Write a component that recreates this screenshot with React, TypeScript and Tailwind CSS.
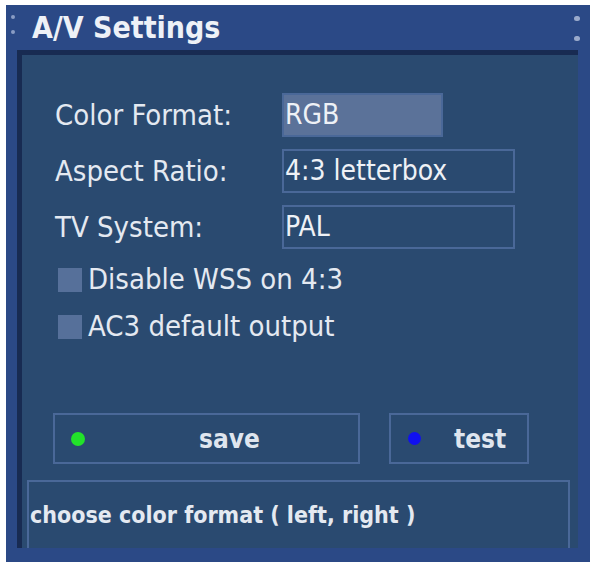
import React from "react";

const font = { fontFamily: '"DejaVu Sans Condensed", "DejaVu Sans", sans-serif' };

const Field = ({ label, value, active, wide }: { label: string; value: string; active?: boolean; wide?: boolean }) => (
  <div className="flex items-center h-[44px]">
    <div className="w-[227px] text-[29px] text-[#e4e9f1] leading-none">{label}</div>
    <div
      className={
        "h-[44px] flex items-center pl-[1px] border-2 text-[28px] leading-none text-[#eef1f6] " +
        (active ? "bg-[#5b7299] border-[#4a6898] " : "border-[#4a6898] ") +
        (wide ? "w-[233px]" : "w-[161px]")
      }
    >
      {value}
    </div>
  </div>
);

const Check = ({ label }: { label: string }) => (
  <div className="flex items-center h-[25px] gap-[6px]">
    <div className="w-[24px] h-[24px] bg-[#56709a]" />
    <span className="text-[29px] leading-none text-[#e4e9f1]">{label}</span>
  </div>
);

export default function App() {
  return (
    <div className="w-[593px] h-[567px] bg-white pl-[6px] pt-[5px]" style={font}>
      <div className="w-[584px] h-[557px] bg-[#2b4986] flex flex-col">
        {/* title bar */}
        <div className="relative h-[45px] flex items-center pl-[26px]">
          <div className="absolute left-[5px] top-[10px] w-[4px] h-[4px] rounded-full bg-[#8a9cc4]" />
          <div className="absolute left-[5px] top-[25px] w-[4px] h-[4px] rounded-full bg-[#8a9cc4]" />
          <div className="absolute right-[10px] top-[11px] w-[6px] h-[5px] rounded-full bg-[#9aaacb]" />
          <div className="absolute right-[10px] top-[31px] w-[6px] h-[5px] rounded-full bg-[#9aaacb]" />
          <span className="text-[30px] font-bold text-[#eef1f7] leading-none">A/V Settings</span>
        </div>

        {/* inner panel */}
        <div className="ml-[11px] mr-[12px] mb-[14px] flex-1 bg-[#2a4a70] border-t-[5px] border-l-[5px] border-[#182b52] flex flex-col">
          <div className="pl-[33px] pt-[38px] flex flex-col gap-[12px]">
            <Field label="Color Format:" value="RGB" active />
            <Field label="Aspect Ratio:" value="4:3 letterbox" wide />
            <Field label="TV System:" value="PAL" wide />
          </div>

          <div className="pl-[36px] pt-[18px] flex flex-col gap-[22px]">
            <Check label="Disable WSS on 4:3" />
            <Check label="AC3 default output" />
          </div>

          <div className="pl-[31px] pt-[74px] flex gap-[29px]">
            <div className="w-[307px] h-[51px] border-2 border-[#4a6898] flex items-center pl-[16px]">
              <div className="w-[14px] h-[14px] rounded-full bg-[#22e22a]" />
              <span className="ml-[114px] text-[26px] font-bold text-[#dfe5ee] leading-none">save</span>
            </div>
            <div className="w-[140px] h-[51px] border-2 border-[#4a6898] flex items-center pl-[17px]">
              <div className="w-[13px] h-[13px] rounded-full bg-[#1010f0]" />
              <span className="ml-[33px] text-[26px] font-bold text-[#dfe5ee] leading-none">test</span>
            </div>
          </div>

          <div className="mt-auto ml-[5px] mr-[8px] h-[68px] border-2 border-b-0 border-[#4a6898] flex items-center pl-[1px]">
            <span className="text-[23px] font-bold text-[#e4e9f1] leading-none">choose color format ( left, right )</span>
          </div>
        </div>
      </div>
    </div>
  );
}
